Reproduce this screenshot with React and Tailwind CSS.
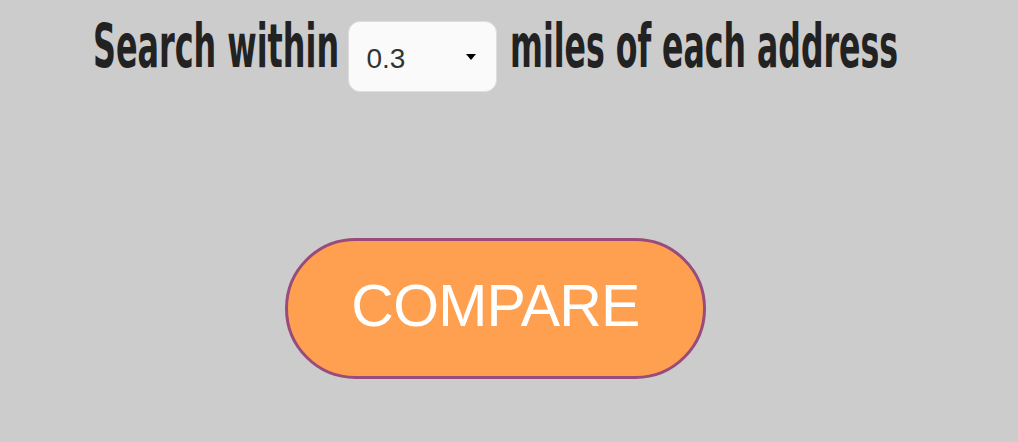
import React from 'react';

const headFont = { fontFamily: '"DejaVu Sans", sans-serif' };

// condensed heading text: DejaVu squeezed to the width of the original face
const Condensed = ({ width, squeeze, children }) => (
  <h2 style={headFont} className={`shrink-0 whitespace-nowrap mt-[-4px] h-[58px] ${width}`}>
    <span className={`inline-block origin-left ${squeeze} scale-y-[1.03] font-stretch-condensed text-[58px] font-bold text-[#222] leading-none`}>
      {children}
    </span>
  </h2>
);

const MilesSelect = () => (
  <div className="relative shrink-0 flex items-center w-[149px] h-[71px] bg-[#fafafa] border border-[#dedede] rounded-[12px] pl-[18px]">
    <span className="text-[28px] text-[#333] font-['Liberation_Sans',sans-serif] leading-none mt-[5px]">0.3</span>
    <span className="absolute left-[117px] top-[32px] w-0 h-0 border-l-[5.5px] border-r-[5.5px] border-t-[6px] border-l-transparent border-r-transparent border-t-black" />
  </div>
);

const App = () => {
  return (
    <div className="w-[1018px] h-[442px] bg-[#cccccc] overflow-hidden">
      <div className="w-[991px] flex flex-col items-center">
        <div className="flex items-start mt-[21px]">
          <Condensed width="w-[255px]" squeeze="scale-x-[0.61]">Search within</Condensed>
          <MilesSelect />
          <div className="w-[13px] shrink-0" />
          <Condensed width="w-[389px]" squeeze="scale-x-[0.605]">miles of each address</Condensed>
        </div>

        <button className="mt-[146px] w-[421px] h-[141px] rounded-full bg-[#ffa050] border-[3px] border-[#994c7c] text-white text-[59px] font-['Liberation_Sans',sans-serif] tracking-[-0.8px] leading-none pb-[4px]">
          COMPARE
        </button>
      </div>
    </div>
  );
};

export default App;
